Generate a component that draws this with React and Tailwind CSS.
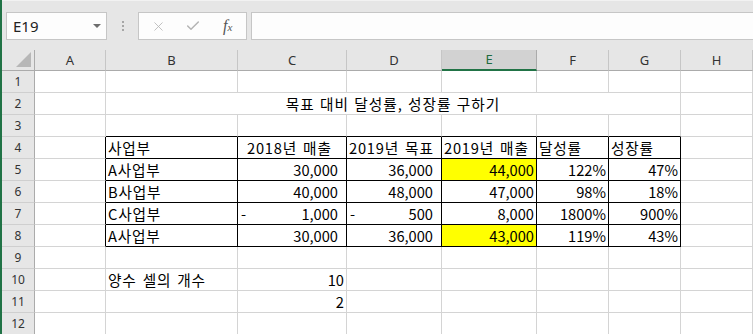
import { X, Check } from 'lucide-react';

const COLS = ['A', 'B', 'C', 'D', 'E', 'F', 'G', 'H'];
const GRID = '#d4d4d4';
const BLACK = '#000000';

// row -> col -> cell
const data = {
  4: {
    B: { text: '사업부' },
    C: { text: '2018년 매출', pl: 'pl-[9px]' },
    D: { text: '2019년 목표' },
    E: { text: '2019년 매출' },
    F: { text: '달성률' },
    G: { text: '성장률' },
  },
  5: {
    B: { text: 'A사업부' },
    C: { text: '30,000', acc: true },
    D: { text: '36,000', acc: true },
    E: { text: '44,000', num: true, fill: true },
    F: { text: '122%', num: true },
    G: { text: '47%', num: true },
  },
  6: {
    B: { text: 'B사업부' },
    C: { text: '40,000', acc: true },
    D: { text: '48,000', acc: true },
    E: { text: '47,000', num: true },
    F: { text: '98%', num: true },
    G: { text: '18%', num: true },
  },
  7: {
    B: { text: 'C사업부' },
    C: { text: '1,000', acc: true, dash: true },
    D: { text: '500', acc: true, dash: true },
    E: { text: '8,000', num: true },
    F: { text: '1800%', num: true },
    G: { text: '900%', num: true },
  },
  8: {
    B: { text: 'A사업부' },
    C: { text: '30,000', acc: true },
    D: { text: '36,000', acc: true },
    E: { text: '43,000', num: true, fill: true },
    F: { text: '119%', num: true },
    G: { text: '43%', num: true },
  },
  10: {
    B: { text: '양수 셀의 개수' },
    C: { text: '10', num: true },
  },
  11: {
    C: { text: '2', num: true },
  },
};

const inTable = (r, c) => r >= 4 && r <= 8 && c >= 1 && c <= 6;

function Cell({ r, c }) {
  const col = COLS[c];
  const cell = data[r]?.[col];
  const right = inTable(r, c) || (r >= 4 && r <= 8 && c === 0) ? BLACK : GRID;
  const bottom = inTable(r, c) || (r === 3 && c >= 1 && c <= 6) ? BLACK : GRID;
  return (
    <div
      className={`h-[22px] border-r border-b flex items-center overflow-hidden whitespace-nowrap ${
        cell?.fill ? 'bg-[#ffff00]' : 'bg-white'
      }`}
      style={{ borderRightColor: right, borderBottomColor: bottom }}
    >
      {cell &&
        (cell.acc ? (
          <div className="flex w-full justify-between pl-[3px] pr-[8px]">
            <span>{cell.dash ? '-' : ''}</span>
            <span>{cell.text}</span>
          </div>
        ) : cell.num ? (
          <div className="w-full text-right pr-[2px]">{cell.text}</div>
        ) : (
          <div className={`${cell.pl || 'pl-[2px]'} tracking-[0.8px] [word-spacing:2px]`}>{cell.text}</div>
        ))}
    </div>
  );
}

export default function App() {
  const rows = Array.from({ length: 12 }, (_, i) => i + 1);

  return (
    <div className="w-[753px] h-[334px] overflow-hidden bg-[#e6e6e6] border-l-2 border-[#217346] font-['Segoe_UI','Noto_Sans',sans-serif]">
      {/* Formula bar */}
      <div className="h-[50px] border-t border-[#f2f2f2] flex items-start pt-[11px]">
        <div className="ml-[4px] w-[101px] h-[28px] bg-[#fdfdfd] border border-[#c6c6c6] flex items-center justify-between pl-[6px] pr-[5px]">
          <span className="text-[15px] text-[#222] font-['Noto_Sans',sans-serif] leading-none">E19</span>
          <span className="w-0 h-0 border-l-[4px] border-r-[4px] border-t-[4px] border-l-transparent border-r-transparent border-t-[#6d6d6d]"></span>
        </div>
        <div className="w-[31px] h-[28px] flex flex-col items-center justify-center gap-[2px]">
          <span className="w-[2px] h-[2px] bg-[#a6a6a6]"></span>
          <span className="w-[2px] h-[2px] bg-[#a6a6a6]"></span>
          <span className="w-[2px] h-[2px] bg-[#a6a6a6]"></span>
        </div>
        <div className="w-[109px] h-[28px] bg-[#fdfdfd] border border-[#c6c6c6] flex items-center">
          <X size={15} strokeWidth={1.3} className="text-[#b4b4b4] ml-[12px]" />
          <Check size={16} strokeWidth={2.2} className="text-[#b4b4b4] ml-[19px]" />
          <span className="ml-[22px] text-[#555] italic font-['Liberation_Serif',serif] text-[16px] leading-none">
            f<span className="text-[11px]">x</span>
          </span>
        </div>
        <div className="ml-[4px] flex-1 h-[28px] bg-[#fdfdfd] border border-[#c6c6c6] border-r-0"></div>
      </div>

      {/* Sheet */}
      <div className="grid grid-cols-[33px_71px_132px_109px_95px_95px_72px_72px_72px] text-[14.67px] text-black font-['Noto_Sans_CJK_KR',sans-serif]">
        {/* header row */}
        <div className="h-[21px] border-r border-b border-[#ababab] relative">
          <div
            className="absolute right-[3px] bottom-[3px] w-0 h-0"
            style={{ borderBottom: '15px solid #b7b7b7', borderLeft: '15px solid transparent' }}
          ></div>
        </div>
        {COLS.map((c) =>
          c === 'E' ? (
            <div key={c} className="h-[21px] bg-[#d2d2d2] border-r border-[#ababab] border-b-2 border-b-[#217346] flex items-center justify-center text-[13px] text-[#1e6b40] font-['Noto_Sans',sans-serif] leading-none">
              {c}
            </div>
          ) : (
            <div key={c} className="h-[21px] border-r border-[#c6c6c6] border-b border-b-[#ababab] flex items-center justify-center text-[13px] text-[#333] font-['Noto_Sans',sans-serif] leading-none">
              {c}
            </div>
          )
        )}

        {rows.map((r) => (
          <div key={r} className="contents">
            <div className="h-[22px] border-r border-[#ababab] border-b border-b-[#cfcfcf] flex items-center justify-center text-[12px] text-[#333] font-['Noto_Sans',sans-serif] leading-none">
              {r}
            </div>
            {r === 2 ? (
              <>
                <div className="h-[22px] bg-white border-r border-b border-[#d4d4d4]"></div>
                <div className="col-span-6 h-[22px] bg-white border-r border-b border-[#d4d4d4] flex items-center justify-center whitespace-nowrap tracking-[1px] [word-spacing:1px]">
                  목표 대비 달성률, 성장률 구하기
                </div>
                <div className="h-[22px] bg-white border-r border-b border-[#d4d4d4]"></div>
              </>
            ) : (
              COLS.map((_, c) => <Cell key={c} r={r} c={c} />)
            )}
          </div>
        ))}
      </div>
    </div>
  );
}
